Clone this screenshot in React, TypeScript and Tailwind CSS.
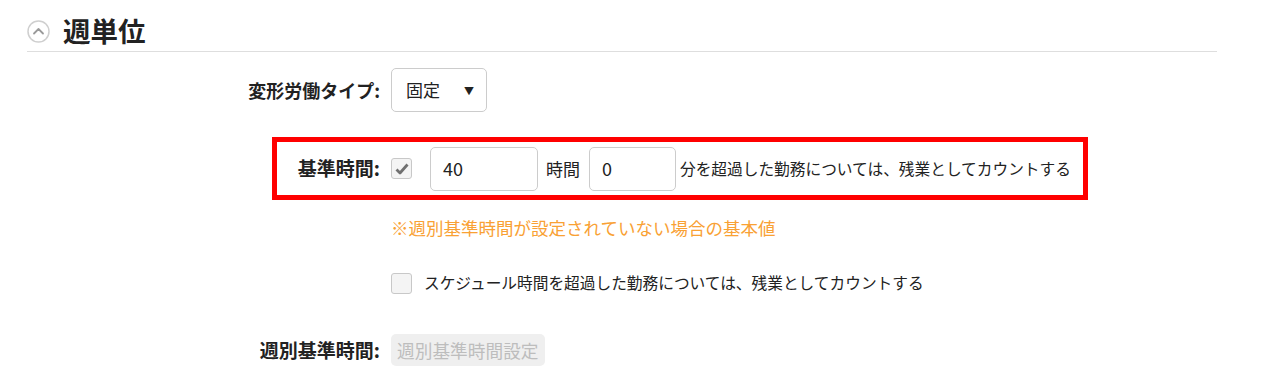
import React from "react";

// Weekly unit settings section
function CollapseIcon() {
  return (
    <svg width="23" height="23" viewBox="0 0 23 23" fill="none">
      <circle cx="11.5" cy="11.5" r="10.5" stroke="#cfcfcf" strokeWidth="1.5" />
      <path d="M7 13.5 L11.5 9 L16 13.5" stroke="#9a9a9a" strokeWidth="1.8" strokeLinecap="round" strokeLinejoin="round" />
    </svg>
  );
}

function CheckBox({ checked }: { checked?: boolean }) {
  return (
    <span className="flex h-[21px] w-[21px] shrink-0 items-center justify-center rounded-[3px] border border-[#c8c8c8] bg-[#f4f4f4]">
      {checked && (
        <svg width="14" height="12" viewBox="0 0 14 12">
          <path d="M1.5 6.5 L5 10 L12.5 1.5" stroke="#707070" strokeWidth="2.8" fill="none" strokeLinejoin="round" />
        </svg>
      )}
    </span>
  );
}

export default function App() {
  return (
    <div
      className="min-h-[385px] bg-white pl-[27px] pr-[63px] text-[#222]"
      style={{ fontFamily: '"Noto Sans CJK JP", "Noto Sans", sans-serif' }}
    >
      {/* header */}
      <div className="mt-[11px] flex h-[41px] items-center border-b border-[#dedede]">
        <CollapseIcon />
        <h2 className="ml-[13px] text-[27.5px] font-bold leading-none">週単位</h2>
      </div>

      {/* 変形労働タイプ */}
      <div className="mt-[16px] flex items-center">
        <div className="w-[353px] text-right text-[18px] font-bold">変形労働タイプ:</div>
        <div className="ml-[11px] flex h-[44px] w-[96px] items-center justify-between rounded-[5px] border border-[#cccccc] pl-[14px] pr-[12px] text-[17px]">
          <span>固定</span>
          <span className="text-[10px]">▼</span>
        </div>
      </div>

      {/* 基準時間 (highlighted) */}
      <div className="ml-[245px] mt-[25px] flex h-[63px] w-[816px] items-center border-[5px] border-[#ff0000]">
        <div className="w-[103px] text-right text-[19px] font-bold">基準時間:</div>
        <div className="ml-[11px]">
          <CheckBox checked />
        </div>
        <div className="ml-[18px] flex h-[44px] w-[108px] items-center rounded-[5px] border border-[#cccccc] pl-[12px] text-[18px]">
          40
        </div>
        <span className="ml-[8px] text-[17px]">時間</span>
        <div className="ml-[9px] flex h-[44px] w-[87px] items-center rounded-[5px] border border-[#cccccc] pl-[12px] text-[18px]">
          0
        </div>
        <span className="ml-[4px] text-[15.7px]">分を超過した勤務については、残業としてカウントする</span>
      </div>

      <div className="ml-[364px] mt-[14px] h-[28px] text-[17.5px] leading-[28px] text-[#f9a134]">
        ※週別基準時間が設定されていない場合の基本値
      </div>

      <div className="ml-[364px] mt-[27px] flex h-[28px] items-center">
        <CheckBox />
        <span className="ml-[12px] text-[15.7px]">スケジュール時間を超過した勤務については、残業としてカウントする</span>
      </div>

      {/* 週別基準時間 */}
      <div className="mt-[37px] flex items-center">
        <div className="w-[353px] text-right text-[19px] font-bold">週別基準時間:</div>
        <div className="ml-[11px] flex h-[32px] items-center rounded-[5px] bg-[#efefef] px-[6px] text-[17.7px] text-[#bdbdbd]">
          週別基準時間設定
        </div>
      </div>
    </div>
  );
}
